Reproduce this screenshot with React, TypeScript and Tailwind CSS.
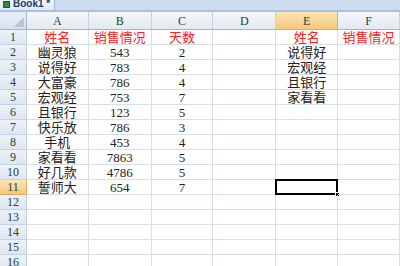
const cols = ["A", "B", "C", "D", "E", "F"]
const widths = ["w-[62px]", "w-[63px]", "w-[62px]", "w-[63px]", "w-[62px]", "w-[62px]"]

type Cell = { t: string, red?: boolean }

const data: Record<number, Cell[]> = {
  1: [{ t: "姓名", red: true }, { t: "销售情况", red: true }, { t: "天数", red: true }, { t: "" }, { t: "姓名", red: true }, { t: "销售情况", red: true }],
  2: [{ t: "幽灵狼" }, { t: "543" }, { t: "2" }, { t: "" }, { t: "说得好" }, { t: "" }],
  3: [{ t: "说得好" }, { t: "783" }, { t: "4" }, { t: "" }, { t: "宏观经" }, { t: "" }],
  4: [{ t: "大富豪" }, { t: "786" }, { t: "4" }, { t: "" }, { t: "且银行" }, { t: "" }],
  5: [{ t: "宏观经" }, { t: "753" }, { t: "7" }, { t: "" }, { t: "家看看" }, { t: "" }],
  6: [{ t: "且银行" }, { t: "123" }, { t: "5" }],
  7: [{ t: "快乐放" }, { t: "786" }, { t: "3" }],
  8: [{ t: "手机" }, { t: "453" }, { t: "4" }],
  9: [{ t: "家看看" }, { t: "7863" }, { t: "5" }],
  10: [{ t: "好几款" }, { t: "4786" }, { t: "5" }],
  11: [{ t: "誓师大" }, { t: "654" }, { t: "7" }],
}

const rows = Array.from({ length: 16 }, (_, i) => i + 1)

export default function App() {
  return (
    <div className="w-[400px] h-[266px] overflow-hidden bg-white font-['Liberation_Serif','Noto_Sans_CJK_SC',serif]">
      {/* workbook tab */}
      <div className="flex h-[10px] bg-[#cddcef] overflow-hidden">
        <div className="flex items-start gap-[3px] w-[55px] h-[10px] bg-gradient-to-b from-[#f4f8fd] to-[#dfe9f6] border-r border-[#9db4d2] pl-[3px]">
          <div className="w-[7px] h-[7px] mt-[1px] bg-[#2e8b3a] border border-[#1d5e26]" />
          <span className="text-[10px] leading-[8px] font-bold text-[#1f3a6e] font-['Liberation_Sans',sans-serif]">Book1 *</span>
        </div>
      </div>
      <div className="h-[2px] bg-[#a9c0e0]" />

      {/* column headers */}
      <div className="flex h-[18px] border-b border-[#9eb6ce]">
        <div className="w-[27px] bg-gradient-to-b from-[#e9eff8] to-[#d6e0ee] border-r border-[#9eb6ce] relative">
          <div className="absolute right-[2px] bottom-[2px] w-0 h-0 border-l-[10px] border-l-transparent border-b-[10px] border-b-[#b4c3d8]" />
        </div>
        {cols.map((c, i) => (
          <div
            key={c}
            className={`${widths[i]} flex items-center justify-center text-[12px] border-r ${c === "E" ? "bg-gradient-to-b from-[#fbe4b6] to-[#f5c77a] border-[#e3ae5c] text-[#27413e]" : "bg-gradient-to-b from-[#f4f7fb] to-[#e3e9f2] border-[#c5d2e3] text-[#27413e]"}`}
          >
            {c}
          </div>
        ))}
      </div>

      {/* rows */}
      {rows.map((r) => (
        <div key={r} className="flex h-[15px]">
          <div
            className={`w-[27px] flex items-center justify-center text-[12px] border-r border-b ${r === 11 ? "bg-gradient-to-b from-[#fbe4b6] to-[#f5c77a] border-[#e3ae5c]" : "bg-gradient-to-b from-[#edf2f9] to-[#dde6f1] border-[#c5d2e3]"} text-[#27413e]`}
          >
            {r}
          </div>
          {cols.map((c, i) => {
            const cell = data[r]?.[i]
            const sel = r === 11 && c === "E"
            return (
              <div
                key={c}
                className={`${widths[i]} relative flex items-center justify-center text-[13px] leading-none border-r border-b border-[#d9dfe9] ${cell?.red ? "text-[#ff2020]" : "text-[#222]"}`}
              >
                {cell?.t}
                {sel && (
                  <div className="absolute left-[-1px] top-[-1px] right-[-1px] bottom-[-1px] border-2 border-black">
                    <div className="absolute right-[-4px] bottom-[-4px] w-[5px] h-[5px] bg-black border border-white" />
                  </div>
                )}
              </div>
            )
          })}
        </div>
      ))}
    </div>
  )
}
